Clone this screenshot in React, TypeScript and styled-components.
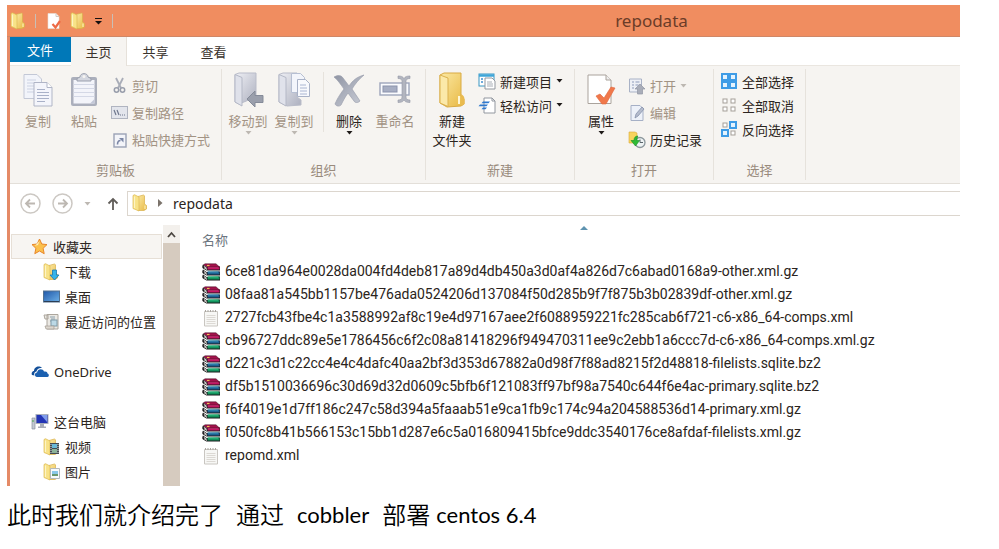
import React from "react";
import styled, { createGlobalStyle } from "styled-components";

const GlobalStyle = createGlobalStyle`
  * { box-sizing: border-box; }
  body {
    margin: 0;
    background: #fff;
    font-family: "Noto Sans", "Noto Sans CJK SC", sans-serif;
    font-size: 13px;
    color: #2b2420;
  }
  button {
    font: inherit;
    color: inherit;
    background: none;
    border: 0;
    padding: 0;
    margin: 0;
  }
  svg { display: block; flex: none; }
`;

const Page = styled.main`
  padding: 5px 39px 0 7px;
`;

const Window = styled.section`
  border-left: 3px solid #e58a66;
  background: #fff;
`;

const TitleBar = styled.header`
  display: flex;
  align-items: center;
  height: 32px;
  margin-left: -3px;
  background: #f08d60;
  border-bottom: 1px solid #cf8767;
`;

const QuickAccess = styled.div`
  display: flex;
  align-items: center;
  flex: 0 0 336px;
  padding-left: 3px;
  button + button { margin-left: 8px; }
`;

const Divider = styled.span<{ $after: number }>`
  width: 1px;
  height: 14px;
  margin: 0 ${(p) => p.$after}px 0 9px;
  background: #c9bfb6;
`;

const Title = styled.h1`
  flex: 1;
  margin: 0;
  text-align: center;
  font-size: 17px;
  font-weight: 400;
  line-height: 24px;
  color: #6b3c28;
`;

const Tabs = styled.nav`
  display: flex;
  height: 29px;
  border-bottom: 1px solid #eae6e0;
`;

const Tab = styled.button<{ $kind?: "file" | "active" }>`
  width: ${(p) => (p.$kind === "file" ? 61 : p.$kind === "active" ? 56 : 58)}px;
  height: ${(p) => (p.$kind === "file" ? 25 : 29)}px;
  line-height: ${(p) => (p.$kind === "file" ? 24 : 28)}px;
  background: ${(p) =>
    p.$kind === "file" ? "#0078b8" : p.$kind === "active" ? "#f6f4f1" : "none"};
  color: ${(p) => (p.$kind === "file" ? "#fff" : "#3a332d")};
  border-right: 1px solid ${(p) => (p.$kind === "active" ? "#e6e1da" : "transparent")};
`;

const Ribbon = styled.div`
  display: flex;
  height: 118px;
  padding: 3px 0;
  background: #f6f4f1;
  border-bottom: 1px solid #e3dfd9;
`;

const Group = styled.section<{ $w: number }>`
  display: flex;
  flex-direction: column;
  justify-content: space-between;
  flex: 0 0 ${(p) => p.$w}px;
  border-right: 1px solid #e6e2dc;
`;

const GroupBody = styled.div<{ $pad: number }>`
  display: flex;
  align-items: flex-start;
  padding-left: ${(p) => p.$pad}px;
`;

const Caption = styled.h2`
  margin: 0;
  text-align: center;
  font-size: 13px;
  font-weight: 400;
  line-height: 20px;
  color: #998b7d;
`;

const BigButton = styled.button`
  display: flex;
  flex-direction: column;
  align-items: center;
  width: 46px;
  padding-top: 3px;
  line-height: 19px;
  white-space: nowrap;
  color: #2b2420;
  &:disabled { color: #a29384; }
  svg + span { margin-top: 4px; }
`;

const Stack = styled.div<{ $tight?: boolean; $left?: number }>`
  display: flex;
  flex-direction: column;
  padding-top: ${(p) => (p.$tight ? 0 : 3)}px;
  margin-left: ${(p) => p.$left ?? 0}px;
  button { height: ${(p) => (p.$tight ? 24 : 27)}px; }
`;

const SmallButton = styled.button`
  display: flex;
  align-items: center;
  gap: 4px;
  white-space: nowrap;
  color: #2b2420;
  &:disabled { color: #a29384; }
`;

const Rule = styled.span`
  align-self: center;
  width: 1px;
  height: 60px;
  margin: 0 2px 0 6px;
  background: #e6e2dc;
`;

const NavBar = styled.div`
  display: flex;
  align-items: center;
  height: 41px;
  padding: 0 0 2px 10px;
`;

const NavIcons = styled.div`
  display: flex;
  align-items: center;
  gap: 11px;
  width: 107px;
  button:nth-child(4) { margin-left: 5px; }
`;

const Address = styled.div`
  display: flex;
  align-items: center;
  flex: 1;
  gap: 10px;
  height: 25px;
  padding: 0 0 1px 4px;
  font-size: 14px;
  border: 1px solid #dcd6ce;
  border-right: 0;
`;

const Body = styled.div`
  display: flex;
  height: 261px;
`;

const Tree = styled.ul`
  flex: 0 0 153px;
  margin: 0;
  padding: 9px 1px 0 1px;
  list-style: none;
`;

const TreeItem = styled.li<{ $level: number; $picked?: boolean; $space?: boolean }>`
  display: flex;
  align-items: center;
  gap: 5px;
  height: 25px;
  margin-top: ${(p) => (p.$space ? 25 : 0)}px;
  padding-left: ${(p) => (p.$level ? 31 : 19)}px;
  white-space: nowrap;
  border: 1px solid ${(p) => (p.$picked ? "#e6dfd6" : "transparent")};
  background: ${(p) => (p.$picked ? "#f7f5f2" : "none")};
`;

const Scrollbar = styled.div`
  display: flex;
  flex-direction: column;
  flex: 0 0 17px;
  background: #d6cbbf;
  button {
    display: flex;
    align-items: center;
    justify-content: center;
    height: 18px;
    background: #f3f0ec;
  }
`;

const Files = styled.table`
  display: block;
  grid-area: 1 / 1;
  padding-left: 22px;
  border-collapse: collapse;
  th {
    height: 35px;
    padding: 0 0 6px 0;
    text-align: left;
    font-weight: 400;
    color: #6d7580;
  }
  td { height: 23px; padding: 0; }
`;

const SortMark = styled.div`
  grid-area: 1 / 1;
  padding-left: 400px;
`;

const ListPane = styled.div`
  display: grid;
  grid-template-columns: minmax(0, 1fr);
  flex: 1;
  align-content: start;
`;

const FileName = styled.span`
  display: flex;
  align-items: center;
  gap: 5px;
  white-space: nowrap;
  font-family: Roboto, "Noto Sans", sans-serif;
  font-size: 14px;
  line-height: 23px;
`;

const Note = styled.p`
  display: flex;
  gap: 13px;
  margin: 12px 0 0;
  line-height: 34px;
  font-family: Lato, "Noto Sans CJK SC", sans-serif;
  font-size: 24px;
  font-weight: 350;
  white-space: nowrap;
  color: #000;
`;

const Latin = styled.span`
  font-size: 22px;
  font-weight: 400;
`;

const NoteTail = styled.span`
  display: flex;
  gap: 6px;
`;

/* ---------- icons ---------- */

const Defs = () => (
  <svg width="0" height="0" aria-hidden="true">
    <defs>
      <linearGradient id="gold" x1="0" y1="0" x2="1" y2="1">
        <stop offset="0" stopColor="#fbe9a4" />
        <stop offset="1" stopColor="#e8b842" />
      </linearGradient>
      <linearGradient id="steel" x1="0" y1="0" x2="1" y2="1">
        <stop offset="0" stopColor="#eff0f5" />
        <stop offset="1" stopColor="#adb0bf" />
      </linearGradient>
      <linearGradient id="slate" x1="0" y1="0" x2="1" y2="1">
        <stop offset="0" stopColor="#8f94a3" />
        <stop offset=".6" stopColor="#b4b8c4" />
        <stop offset="1" stopColor="#c9ccd5" />
      </linearGradient>
      <linearGradient id="screen" x1="0" y1="0" x2="1" y2="1">
        <stop offset="0" stopColor="#1f57a8" />
        <stop offset="1" stopColor="#6db1e8" />
      </linearGradient>
    </defs>
  </svg>
);

const Svg = ({ w, h, children }: { w: number; h: number; children: React.ReactNode }) => (
  <svg width={w} height={h} viewBox={`0 0 ${w} ${h}`} fill="none" aria-hidden="true">
    {children}
  </svg>
);

const folderShapes = (
  <>
    <path d="M6 2.500 11.500 1l1 .8V10l2 1.500V15L12 16.500H6z" fill="url(#gold)" stroke="#d9b04a" strokeWidth=".7" />
    <path d="M1 1.500 2.500.700 7 3v14L1 14.500z" fill="#f8e287" stroke="#dcb750" strokeWidth=".7" />
    <path d="M2.500 2.500v11.500" stroke="#fdf4c4" strokeWidth="1.200" />
    <path d="M13 11.500v3.500" stroke="#fff6c8" />
  </>
);

const FolderSmall = () => <Svg w={16} h={18}>{folderShapes}</Svg>;

const CheckDoc = () => (
  <Svg w={16} h={18}>
    <path d="M2 1.500h8l3 3v12H2z" fill="#fff" stroke="#e8e0da" strokeWidth=".6" />
    <path d="M10 1.500v3h3" stroke="#cfc8c2" />
    <path d="m6.500 12 3 3.500L14 9" stroke="#ed6a45" strokeWidth="2.200" />
  </Svg>
);

const CustomizeMark = () => (
  <Svg w={9} h={8}>
    <path d="M1 1.500h7" stroke="#161010" />
    <path d="M1 4h7L4.500 7.500z" fill="#161010" />
  </Svg>
);

const Caret = ({ dim }: { dim?: boolean }) => (
  <Svg w={7} h={4}>
    <path d="M.5 0h6l-3 3.500z" fill={dim ? "#bdb8b2" : "#1e1a18"} />
  </Svg>
);

const CopyIcon = () => (
  <Svg w={32} h={36}>
    <path d="M2 2.500h13l4.500 4.500v19.500H2z" fill="#f2f4fa" stroke="#c3c8d6" />
    <path d="M5 8h9M5 11h9M5 14h7M5 17h7M5 20h7" stroke="#ccd2e2" />
    <path d="M12 10.500h13l5 5V34H12z" fill="#f4f5fb" stroke="#b0b5c6" />
    <path d="M25 10.500v5h5" stroke="#b0b5c6" fill="#fff" />
    <path d="M15 17.500h8M15 20.500h12M15 23.500h12M15 26.500h12M15 29.500h8" stroke="#a9b1c8" />
  </Svg>
);

const PasteIcon = () => (
  <Svg w={32} h={36}>
    <rect x="3" y="5" width="26" height="29" rx="2" fill="#abafbc" />
    <rect x="5.500" y="8" width="21" height="23.500" fill="#f3f4fa" />
    <path d="M5.500 12.500h21M5.500 16.500h21M5.500 20.500h21M5.500 24.500h21" stroke="#d4d8e6" />
    <path d="M22 31.500h4.500V27z" fill="#c3c8d8" />
    <path d="M9 9V6.500L12 5c0-4.500 8-4.500 8 0l3 1.500V9z" fill="#d3d6df" stroke="#9a9fad" />
    <circle cx="16" cy="4.500" r="1.500" fill="#f6f4f1" />
  </Svg>
);

const ScissorsIcon = () => (
  <Svg w={17} h={17}>
    <path d="m5 1 5 10M12 1 7 11" stroke="#a9adb8" strokeWidth="1.800" />
    <circle cx="5.500" cy="13" r="2.200" stroke="#989dab" strokeWidth="1.500" />
    <circle cx="11.500" cy="13" r="2.200" stroke="#989dab" strokeWidth="1.500" />
  </Svg>
);

const PathIcon = () => (
  <Svg w={17} h={13}>
    <rect x=".5" y=".5" width="16" height="12" fill="#e3e5ec" stroke="#b0b4c0" />
    <path d="m3 4 2 5M6 4l2 5" stroke="#6f778d" strokeWidth="1.200" />
    <path d="M9 9h1M11 9h1M13 9h1" stroke="#6f778d" />
  </Svg>
);

const ShortcutIcon = () => (
  <Svg w={17} h={16}>
    <rect x="3" y="2" width="12" height="13" fill="#f3f4f9" stroke="#9ba2b6" strokeWidth="1.400" />
    <path d="M6 3V1h6v2z" fill="#b5bac8" />
    <path d="M6.500 12.500c0-3 1-4 3-4" stroke="#7b86a5" strokeWidth="1.600" />
    <path d="M8 6h4.500v4.500z" fill="#7b86a5" />
  </Svg>
);

const MoveIcon = () => (
  <Svg w={34} h={36}>
    <path d="M4 2.500 8 1h17v24L8 32l-4-2z" fill="url(#steel)" stroke="#b9bcc9" />
    <path d="m4 2.500 7 3V34l-7-4z" fill="#dfe1ea" stroke="#b4b8c6" />
    <path d="m16 27 8-8v4.500h8v7h-8V35z" fill="#9a9fac" stroke="#858b99" />
  </Svg>
);

const CopyToIcon = () => (
  <Svg w={34} h={36}>
    <path d="M2 2.500 6 1h14v24l4 3v5l-14 1-8-4z" fill="url(#steel)" stroke="#b9bcc9" />
    <path d="m2 2.500 7 3V34l-7-4z" fill="#e0e2eb" stroke="#b4b8c6" />
    <path d="M14.500 1.500h9l4 4v15h-13z" fill="#f3f5fb" stroke="#b6bfd2" />
    <path d="M20.500 7.500h8l4 4v13h-12z" fill="#f8f9fd" stroke="#a9b2c7" />
    <path d="M23 13h6M23 16h7M23 19h7M23 22h7" stroke="#aab6d2" />
  </Svg>
);

const DeleteIcon = () => (
  <Svg w={34} h={36}>
    <path
      d="M2 5c4-2 7-2 9 1l6 8c4-6 8-9 15-11-5 4-9 9-12 14l8 12c-2 2-5 2-6 0l-6-8c-3 4-5 8-7 12-2 2-5 1-6-1 3-7 6-11 9-15C9 13 6 8 2 5z"
      fill="url(#slate)"
      stroke="#9b9faD"
      strokeWidth=".7"
    />
  </Svg>
);

const RenameIcon = () => (
  <Svg w={34} h={36}>
    <rect x="2" y="11" width="29" height="12" fill="#fafbfe" stroke="#9da5bb" strokeWidth="1.400" />
    <rect x="5" y="14" width="14" height="6" fill="#a7aec3" stroke="#8b93ac" />
    <path
      d="M20 4c4 0 5 1 6 2.500C27 5 28 4 32 4v2.500c-3 0-4 1-4 3V25c0 2 1 3 4 3v2.500c-4 0-5-1-6-2.500-1 1.500-2 2.500-6 2.500V28c3 0 4-1 4-3V9.500c0-2-1-3-4-3z"
      fill="#b2b5bf"
      stroke="#9599a6"
      strokeWidth=".6"
    />
  </Svg>
);

const NewFolderIcon = () => (
  <Svg w={34} h={36}>
    <path d="M5 3 9 1h17v23l3 3v5l-3 2-14 1-7-4z" fill="url(#gold)" stroke="#d9aa43" />
    <path d="m5 3 8 3v28.500L5 31z" fill="#fbe9a9" stroke="#dbb14e" />
    <path d="M24 24v8" stroke="#fff7d6" strokeWidth="2" />
    <path d="M26 22c2 1 4 3 3.500 6v4l-3 2z" fill="#e9ba50" />
  </Svg>
);

const NewItemIcon = () => (
  <Svg w={18} h={17}>
    <rect x="1" y="1" width="15" height="12" fill="#fff" stroke="#3896c4" />
    <path d="M1 2.500h15" stroke="#3fa6d8" strokeWidth="2.500" />
    <path d="M3 6h2M3 9h2" stroke="#3f8fd0" strokeWidth="1.500" />
    <path d="M7 5h7l3 3v8H7z" fill="#fff" stroke="#92979f" />
    <path d="M9 9h5M9 11h6M9 13h6" stroke="#a9aeb6" />
  </Svg>
);

const EasyAccessIcon = () => (
  <Svg w={18} h={17}>
    <path d="M6 1h8l3 3v12H6z" fill="#fff" stroke="#92979f" />
    <path d="M14 1v3h3" stroke="#92979f" />
    <path d="M5 4.500h7l-1.500 1.800H3.500zM2 7.500h8L8.500 9.300H.5zM5 10.500h4l-1.500 1.800h-4z" fill="#2f79cf" />
  </Svg>
);

const PropertiesIcon = () => (
  <Svg w={34} h={36}>
    <path d="M4 3h18l5 5v23.500H4z" fill="#fff" stroke="#aaa39c" />
    <path d="M22 3v5h5" fill="#eee" stroke="#aaa39c" />
    <path d="m12 24 4-2 4 4 7-11 4 1-9 16h-4z" fill="#f0784a" stroke="#e0643a" strokeWidth=".6" />
  </Svg>
);

const OpenIcon = () => (
  <Svg w={18} h={18}>
    <path d="M1.500 2h12v13h-12z" fill="#eef0f6" stroke="#a9b2c6" />
    <path d="M4 5h2M4 8h2M4 11h2M7.500 5h4M7.500 8h3" stroke="#8e9bba" />
    <path d="m12 7 5 5h-2.500v5h-5v-5H7z" fill="#a9adb9" stroke="#9095a3" strokeWidth=".7" />
  </Svg>
);

const EditIcon = () => (
  <Svg w={18} h={18}>
    <path d="M3 1.500h9l3 3v12H3z" fill="#edf1f9" stroke="#a6b0c6" />
    <path d="m7 14 1-4 6-7 2 2-6 7z" fill="#b5bccd" stroke="#8792ab" strokeWidth=".8" />
  </Svg>
);

const HistoryIcon = () => (
  <Svg w={18} h={18}>
    <path d="M1 1h6l2 1v10H1z" fill="#f7d45e" stroke="#dba93a" strokeWidth=".6" />
    <circle cx="12" cy="11.500" r="5" fill="#eef3f4" stroke="#8c979c" strokeWidth="1.300" />
    <path d="M12 8.500v3h3" stroke="#59646a" />
    <path d="M10 5C7 5 6 7 6 9.500H3L7.500 15l4-5.500H9C9 8 9 6 10 5z" fill="#2fba35" stroke="#168d25" strokeWidth=".6" />
  </Svg>
);

const Cell = ({ x, y, on }: { x: number; y: number; on?: boolean }) =>
  on ? (
    <rect x={x + 1} y={y + 1} width="6" height="6" fill="#e4f3fe" stroke="#3f9ce6" strokeWidth="2" />
  ) : (
    <rect x={x + 2} y={y + 2} width="4" height="4" fill="#fff" stroke="#a59f99" />
  );

const SelectIcon = ({ on }: { on: boolean[] }) => (
  <Svg w={17} h={17}>
    {on.map((v, i) => (
      <Cell key={i} x={(i % 2) * 8} y={i > 1 ? 8 : 0} on={v} />
    ))}
  </Svg>
);

const ArrowCircle = ({ flip }: { flip?: boolean }) => (
  <Svg w={21} h={21}>
    <circle cx="10.500" cy="10.500" r="9.500" stroke="#ccc8c3" strokeWidth="1.500" />
    <path
      d={flip ? "M6 10.500h9M11 6.500l4 4-4 4" : "M15 10.500H6M10 6.500l-4 4 4 4"}
      stroke="#bdb8b2"
      strokeWidth="1.800"
    />
  </Svg>
);

const UpArrow = () => (
  <Svg w={12} h={14}>
    <path d="M6 13V2M1.500 6.500 6 2l4.500 4.500" stroke="#615d59" strokeWidth="1.800" />
  </Svg>
);

const Crumb = () => (
  <Svg w={5} h={8}>
    <path d="M0 0v8l4.500-4z" fill="#7b736b" />
  </Svg>
);

const ScrollUp = () => (
  <Svg w={9} h={7}>
    <path d="m1 6 3.500-4L8 6" stroke="#4d4843" strokeWidth="1.800" />
  </Svg>
);

const StarIcon = () => (
  <Svg w={17} h={17}>
    <path d="m8.500 1 2.300 5 5.200.6-3.900 3.700 1.100 5.400-4.700-2.700-4.700 2.700 1.100-5.400L1 6.600 6.200 6z" fill="#fbc04c" stroke="#e8862a" />
    <path d="M8.500 3 7 7l-3 .8z" fill="#fff0b8" />
  </Svg>
);

const DownloadsIcon = () => (
  <Svg w={17} h={18}>
    {folderShapes}
    <path d="M9.500 7h4v5H16l-4.500 5L7 12h2.500z" fill="#35b3ea" stroke="#1879b3" strokeWidth=".8" />
  </Svg>
);

const DesktopIcon = () => (
  <Svg w={17} h={17}>
    <rect x=".5" y="3" width="16" height="11" fill="url(#screen)" stroke="#52718f" />
    <path d="M1 13.500h15" stroke="#2c3e54" />
  </Svg>
);

const RecentIcon = () => (
  <Svg w={17} h={17}>
    <path d="M1 2h4v4H2zM4 1.500h11V16H4z" fill="#ebe9e4" stroke="#aca69d" />
    <path d="M7 4h5M8 6h4M7 8h2" stroke="#8ba0ad" />
    <rect x="8" y="7" width="6" height="6" fill="#bcd9e6" stroke="#7f9aa8" />
    <path d="M2 13h9v3H3z" fill="#dcd7cf" stroke="#a49c92" strokeWidth=".7" />
  </Svg>
);

const CloudIcon = () => (
  <Svg w={18} h={13}>
    <path d="M1 10c-1-2 .5-4 2-4 0-4 5-6 8-3-3-.5-5 1-5.500 3.500C3 7 3 9 3.500 10.500z" fill="#134f99" />
    <path d="M6 12c-3-.5-2.500-4.500 0-4.500C6.500 3.500 12 3 13 6.500c3-.5 3.500 1 3.500 2 2 .5 1.500 3.500 0 3.500z" fill="#1b60b0" />
  </Svg>
);

const ComputerIcon = () => (
  <Svg w={18} h={17}>
    <path d="M1 5h3v11H1z" fill="#c4c9d2" stroke="#8b93a0" strokeWidth=".7" />
    <path d="M2 7v2" stroke="#4aa84a" />
    <rect x="5" y="1.500" width="12" height="9" fill="#2335b5" stroke="#a9afbc" />
    <path d="m10 2 6 0v7z" fill="#7f9cec" />
    <path d="M9 11h4v2.500h2V15H7v-1.500h2z" fill="#a8adb8" />
  </Svg>
);

const VideosIcon = () => (
  <Svg w={17} h={18}>
    {folderShapes}
    <rect x="7" y="5" width="9" height="11" fill="#454b52" />
    <rect x="9" y="6" width="5" height="4" fill="#69b8d8" />
    <rect x="9" y="11" width="5" height="4" fill="#8bb39a" />
    <path d="M8 6v9M15 6v9" stroke="#d8dbde" strokeDasharray="1 1" />
  </Svg>
);

const PicturesIcon = () => (
  <Svg w={17} h={18}>
    {folderShapes}
    <path d="M7.500 5.500h9v10h-9z" fill="#f7fafc" stroke="#b4b9bd" />
    <path d="M9 8h6v3H9z" fill="#8ac7e8" />
    <path d="M9 11h6v2H9z" fill="#69986e" />
  </Svg>
);

const Book = ({ y, fill, lit }: { y: number; fill: string; lit: string }) => (
  <g>
    <path d={`M4.500 ${y + 2.5} 1 ${y}c-1 2-1 3 0 4l3.500 2H18v-4z`} fill="#1b1a1c" />
    <path d={`M1.800 ${y + 1.8}l3 2M2 ${y + 3.2}l3 1.800`} stroke="#e9e6e2" strokeWidth=".9" />
    <path d={`M5.500 ${y + 2}H17.500v3H5.500z`} fill={fill} />
    <path d={`M6 ${y + 2.5}h10`} stroke={lit} strokeWidth=".8" />
  </g>
);

const ArchiveIcon = () => (
  <Svg w={18} h={18}>
    <Book y={11.5} fill="#12915c" lit="#40cf92" />
    <Book y={6.5} fill="#1c5f92" lit="#44a8c6" />
    <Book y={1.5} fill="#c51563" lit="#f05c9c" />
    <path d="M1.500 1.800 5 4h12.500L14 .8H3z" fill="#a3124c" stroke="#3a1020" strokeWidth=".5" />
    <path d="M5 2.500h2.500" stroke="#f0c050" strokeWidth="1.200" />
  </Svg>
);

const TextIcon = () => (
  <Svg w={18} h={18}>
    <path d="M2.500 2.500h13V17h-13z" fill="#f7f7f5" stroke="#c9c6c1" />
    <path d="M3 2h12" stroke="#aaa6a0" strokeWidth="2" strokeDasharray="1 1.500" />
    <path d="M4.500 6.500h9M4.500 8.500h9M4.500 10.500h9M4.500 12.500h9M4.500 14.500h9" stroke="#dcd9d4" />
  </Svg>
);

/* ---------- data ---------- */

const files: { name: string; text?: boolean }[] = [
  { name: "6ce81da964e0028da004fd4deb817a89d4db450a3d0af4a826d7c6abad0168a9-other.xml.gz" },
  { name: "08faa81a545bb1157be476ada0524206d137084f50d285b9f7f875b3b02839df-other.xml.gz" },
  { name: "2727fcb43fbe4c1a3588992af8c19e4d97167aee2f6088959221fc285cab6f721-c6-x86_64-comps.xml", text: true },
  { name: "cb96727ddc89e5e1786456c6f2c08a81418296f949470311ee9c2ebb1a6ccc7d-c6-x86_64-comps.xml.gz" },
  { name: "d221c3d1c22cc4e4c4dafc40aa2bf3d353d67882a0d98f7f88ad8215f2d48818-filelists.sqlite.bz2" },
  { name: "df5b1510036696c30d69d32d0609c5bfb6f121083ff97bf98a7540c644f6e4ac-primary.sqlite.bz2" },
  { name: "f6f4019e1d7ff186c247c58d394a5faaab51e9ca1fb9c174c94a204588536d14-primary.xml.gz" },
  { name: "f050fc8b41b566153c15bb1d287e6c5a016809415bfce9ddc3540176ce8afdaf-filelists.xml.gz" },
  { name: "repomd.xml", text: true },
];

const tree: { label: string; icon: React.ReactNode; level: number; picked?: boolean; space?: boolean }[] = [
  { label: "收藏夹", icon: <StarIcon />, level: 0, picked: true },
  { label: "下载", icon: <DownloadsIcon />, level: 1 },
  { label: "桌面", icon: <DesktopIcon />, level: 1 },
  { label: "最近访问的位置", icon: <RecentIcon />, level: 1 },
  { label: "OneDrive", icon: <CloudIcon />, level: 0, space: true },
  { label: "这台电脑", icon: <ComputerIcon />, level: 0, space: true },
  { label: "视频", icon: <VideosIcon />, level: 1 },
  { label: "图片", icon: <PicturesIcon />, level: 1 },
];

export default function App() {
  return (
    <Page>
      <GlobalStyle />
      <Window>
        <TitleBar>
          <QuickAccess>
            <FolderSmall />
            <Divider $after={10} />
            <button aria-label="属性"><CheckDoc /></button>
            <button aria-label="新建文件夹"><FolderSmall /></button>
            <button aria-label="自定义快速访问工具栏"><CustomizeMark /></button>
            <Divider $after={0} />
          </QuickAccess>
          <Title>repodata</Title>
        </TitleBar>
        <Tabs>
          <Tab $kind="file">文件</Tab>
          <Tab $kind="active">主页</Tab>
          <Tab>共享</Tab>
          <Tab>查看</Tab>
        </Tabs>
        <Ribbon>
          <Group $w={212}>
            <GroupBody $pad={5}>
              <BigButton disabled><CopyIcon /><span>复制</span></BigButton>
              <BigButton disabled><PasteIcon /><span>粘贴</span></BigButton>
              <Stack $left={4}>
                <SmallButton disabled><ScissorsIcon />剪切</SmallButton>
                <SmallButton disabled><PathIcon />复制路径</SmallButton>
                <SmallButton disabled><ShortcutIcon />粘贴快捷方式</SmallButton>
              </Stack>
            </GroupBody>
            <Caption>剪贴板</Caption>
          </Group>
          <Group $w={204}>
            <GroupBody $pad={3}>
              <BigButton disabled><MoveIcon /><span>移动到</span><Caret dim /></BigButton>
              <BigButton disabled><CopyToIcon /><span>复制到</span><Caret dim /></BigButton>
              <Rule />
              <BigButton><DeleteIcon /><span>删除</span><Caret /></BigButton>
              <BigButton disabled><RenameIcon /><span>重命名</span></BigButton>
            </GroupBody>
            <Caption>组织</Caption>
          </Group>
          <Group $w={149}>
            <GroupBody $pad={3}>
              <BigButton><NewFolderIcon /><span>新建<br />文件夹</span></BigButton>
              <Stack $tight $left={3}>
                <SmallButton><NewItemIcon />新建项目 <Caret /></SmallButton>
                <SmallButton><EasyAccessIcon />轻松访问 <Caret /></SmallButton>
              </Stack>
            </GroupBody>
            <Caption>新建</Caption>
          </Group>
          <Group $w={139}>
            <GroupBody $pad={3}>
              <BigButton><PropertiesIcon /><span>属性</span><Caret /></BigButton>
              <Stack $left={4}>
                <SmallButton disabled><OpenIcon />打开 <Caret dim /></SmallButton>
                <SmallButton disabled><EditIcon />编辑</SmallButton>
                <SmallButton><HistoryIcon />历史记录</SmallButton>
              </Stack>
            </GroupBody>
            <Caption>打开</Caption>
          </Group>
          <Group $w={92}>
            <GroupBody $pad={7}>
              <Stack $tight>
                <SmallButton><SelectIcon on={[true, true, true, true]} />全部选择</SmallButton>
                <SmallButton><SelectIcon on={[false, false, false, false]} />全部取消</SmallButton>
                <SmallButton><SelectIcon on={[false, true, true, false]} />反向选择</SmallButton>
              </Stack>
            </GroupBody>
            <Caption>选择</Caption>
          </Group>
        </Ribbon>
        <NavBar>
          <NavIcons>
            <button aria-label="后退"><ArrowCircle /></button>
            <button aria-label="前进"><ArrowCircle flip /></button>
            <button aria-label="最近浏览的位置"><Caret dim /></button>
            <button aria-label="向上"><UpArrow /></button>
          </NavIcons>
          <Address>
            <FolderSmall />
            <Crumb />
            <span>repodata</span>
          </Address>
        </NavBar>
        <Body>
          <Tree>
            {tree.map((t) => (
              <TreeItem key={t.label} $level={t.level} $picked={t.picked} $space={t.space}>
                {t.icon}
                {t.label}
              </TreeItem>
            ))}
          </Tree>
          <Scrollbar>
            <button aria-label="向上滚动"><ScrollUp /></button>
          </Scrollbar>
          <ListPane>
            <SortMark>
              <Svg w={8} h={6}>
                <path d="m0 5 4-4 4 4z" fill="#5e93b0" />
              </Svg>
            </SortMark>
            <Files>
              <thead>
                <tr><th scope="col">名称</th></tr>
              </thead>
              <tbody>
                {files.map((f) => (
                  <tr key={f.name}>
                    <td>
                      <FileName>
                        {f.text ? <TextIcon /> : <ArchiveIcon />}
                        {f.name}
                      </FileName>
                    </td>
                  </tr>
                ))}
              </tbody>
            </Files>
          </ListPane>
        </Body>
      </Window>
      <Note>
        <span>此时我们就介绍完了</span>
        <span>通过</span>
        <Latin>cobbler</Latin>
        <NoteTail>
          <span>部署</span>
          <Latin>centos 6.4</Latin>
        </NoteTail>
      </Note>
      <Defs />
    </Page>
  );
}
